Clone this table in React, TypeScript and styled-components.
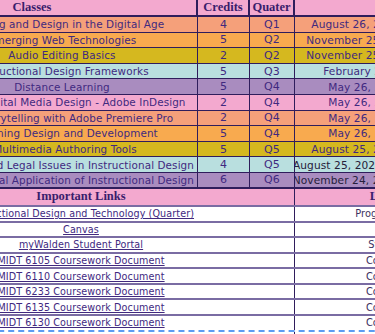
import React from "react";
import styled, { createGlobalStyle } from "styled-components";

const Global = createGlobalStyle`
  html, body { margin: 0; padding: 0; background: #ffffff; }
  body { overflow: hidden; }
`;

const COLS = "59px 271px 52px 45px 240px";
const LINE = "#2f1d5c";
const TEXT = "#41297f";

const Viewport = styled.div`
  width: 375px;
  height: 334px;
  overflow: hidden;
  background: #ffffff;
`;

const Sheet = styled.div`
  width: 667px;
  margin-left: -132px;
  display: flex;
  flex-direction: column;
`;

const Row = styled.div<{ $bg: string; $h: number; $bottom?: string }>`
  display: grid;
  grid-template-columns: ${COLS};
  height: ${(p) => p.$h}px;
  box-sizing: border-box;
  background: ${(p) => p.$bg};
  border-bottom: ${(p) => p.$bottom ?? `1px solid ${LINE}`};
`;

const Cell = styled.div<{ $span?: string; $line?: number; $dark?: boolean }>`
  grid-column: ${(p) => p.$span ?? "auto"};
  display: flex;
  align-items: center;
  justify-content: center;
  overflow: hidden;
  white-space: nowrap;
  box-sizing: border-box;
  border-right: ${(p) => (p.$line ? `${p.$line}px solid ${LINE}` : "none")};
  font-family: "DejaVu Sans", "Noto Sans", sans-serif;
  font-size: 11px;
  color: ${(p) => (p.$dark ? "#26203a" : TEXT)};
`;

const NameCell = styled(Cell)<{ $shift?: number; $end?: boolean }>`
  font-size: 10.4px;
  letter-spacing: 0.1px;
  justify-content: ${(p) => (p.$end ? "flex-end" : "center")};
  padding-left: ${(p) => (p.$end ? 0 : (p.$shift ?? 0) * 2)}px;
  padding-right: ${(p) => (p.$end ? 3 : 0)}px;
`;

const NumCell = styled(Cell)`
  font-size: 11px;
  letter-spacing: 0.2px;
`;

const DateCell = styled(Cell)`
  font-size: 10.6px;
  letter-spacing: 0.1px;
`;

const HeadCell = styled(Cell)`
  font-family: "Liberation Serif", "DejaVu Serif", serif;
  font-weight: bold;
  font-size: 12.5px;
  color: #3a1d6c;
`;

const LinkCell = styled(Cell)`
  font-size: 9.6px;
  letter-spacing: 0.1px;
`;

const NoteCell = styled(LinkCell)`
  font-size: 9.8px;
  color: #3b3160;
`;

const LinkText = styled.span`
  text-decoration: underline;
  text-underline-offset: 1px;
  color: ${TEXT};
`;

type ClassRow = {
  name: string;
  credits: number;
  q: string;
  date: string;
  bg: string;
  dark?: boolean;
  shift?: number;
  end?: boolean;
};

const SALMON = "#f5a07a";
const ORANGE = "#f8aa4f";
const MUSTARD = "#d5b81f";
const TEAL = "#b9dfdf";
const PURPLE = "#a98cbf";
const PINK = "#f3a9cf";

const classes: ClassRow[] = [
  { name: "Learning and Design in the Digital Age", credits: 4, q: "Q1", date: "August 26, 2024 - November 24, 2024", bg: SALMON },
  { name: "Emerging Web Technologies", credits: 5, q: "Q2", date: "November 25, 2024 - February 23, 2025", bg: ORANGE },
  { name: "Audio Editing Basics", credits: 2, q: "Q2", date: "November 25, 2024 - February 23, 2025", bg: MUSTARD },
  { name: "Instructional Design Frameworks", credits: 5, q: "Q3", date: "February 24, 2025 - May 25, 2025", bg: TEAL },
  { name: "Distance Learning", credits: 5, q: "Q4", date: "May 26, 2025 - August 24, 2025", bg: PURPLE },
  { name: "Digital Media Design - Adobe InDesign", credits: 2, q: "Q4", date: "May 26, 2025 - August 24, 2025", bg: PINK, shift: 22 },
  { name: "Storytelling with Adobe Premiere Pro", credits: 2, q: "Q4", date: "May 26, 2025 - August 24, 2025", bg: SALMON, shift: 14 },
  { name: "Learning Design and Development", credits: 5, q: "Q4", date: "May 26, 2025 - August 24, 2025", bg: ORANGE, shift: 4 },
  { name: "Multimedia Authoring Tools", credits: 5, q: "Q5", date: "August 25, 2025 - November 23, 2025", bg: MUSTARD, shift: 3 },
  { name: "Ethical and Legal Issues in Instructional Design", credits: 4, q: "Q5", date: "August 25, 2025 - November 23, 2025 (Final)", bg: TEAL, dark: true, end: true },
  { name: "Practical Application of Instructional Design", credits: 6, q: "Q6", date: "November 24, 2025 - February 22, 2026 (Q6)", bg: PURPLE, dark: true, end: true },
];

const links: { label: string; note: string }[] = [
  { label: "Instructional Design and Technology (Quarter)", note: "Program Overview Page" },
  { label: "Canvas", note: "" },
  { label: "myWalden Student Portal", note: "Student Resources" },
  { label: "MIDT 6105 Coursework Document", note: "Coursework Tracker" },
  { label: "MIDT 6110 Coursework Document", note: "Coursework Tracker" },
  { label: "MIDT 6233 Coursework Document", note: "Coursework Tracker" },
  { label: "MIDT 6135 Coursework Document", note: "Coursework Tracker" },
  { label: "MIDT 6130 Coursework Document", note: "Coursework Tracker" },
];

const LINK_LINE = "2px solid #7a6ca3";

export default function App() {
  return (
    <Viewport>
      <Global />
      <Sheet>
        <Row $bg={PINK} $h={17} $bottom={`2px solid ${LINE}`}>
          <HeadCell $span="1 / 3" $line={2}>Classes</HeadCell>
          <HeadCell $line={2}>Credits</HeadCell>
          <HeadCell $line={2}>Quater</HeadCell>
          <HeadCell />
        </Row>
        {classes.map((c, i) => (
          <Row
            key={c.name}
            $bg={c.bg}
            $h={15.6}
            $bottom={i === classes.length - 1 ? `2px solid ${LINE}` : undefined}
          >
            <Cell />
            <NameCell $line={1} $shift={c.shift} $end={c.end}>
              {c.name}
            </NameCell>
            <NumCell $line={1}>{c.credits}</NumCell>
            <NumCell $line={1}>{c.q}</NumCell>
            <DateCell $dark={c.dark}>{c.date}</DateCell>
          </Row>
        ))}
        <Row $bg={PINK} $h={18.4} $bottom={LINK_LINE}>
          <HeadCell $span="1 / 5" $line={1}>Important Links</HeadCell>
          <HeadCell>Link Description</HeadCell>
        </Row>
        {links.map((l, i) => (
          <Row
            key={l.label}
            $bg="#ffffff"
            $h={15.6}
            $bottom={i === links.length - 1 ? "2px dashed #5b9cf2" : LINK_LINE}
          >
            <LinkCell $span="1 / 5" $line={1}>
              <LinkText>{l.label}</LinkText>
            </LinkCell>
            <NoteCell>{l.note}</NoteCell>
          </Row>
        ))}
        <Row $bg="#ffffff" $h={20} $bottom="none">
          <Cell $span="1 / 5" $line={1} />
          <Cell />
        </Row>
      </Sheet>
    </Viewport>
  );
}
